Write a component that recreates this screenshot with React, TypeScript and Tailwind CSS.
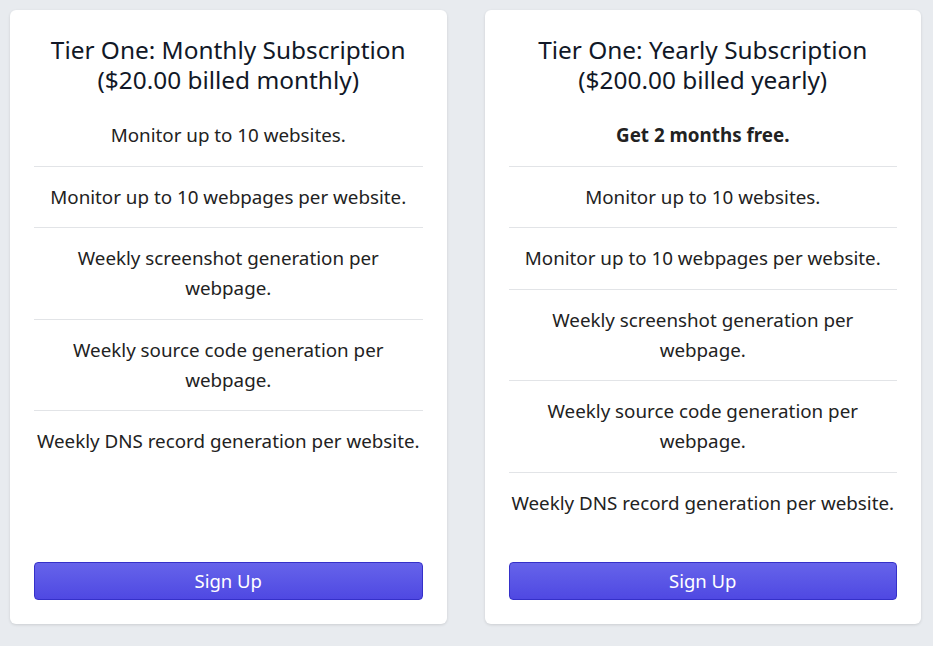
import React from "react";

const features = [
  "Monitor up to 10 websites.",
  "Monitor up to 10 webpages per website.",
  "Weekly screenshot generation per webpage.",
  "Weekly source code generation per webpage.",
  "Weekly DNS record generation per website.",
];

function Card({ title, sub, bonus }: { title: string; sub: string; bonus?: string }) {
  const items = bonus ? [bonus, ...features] : features;
  return (
    <div className="flex-1 bg-white rounded-[6px] shadow-[0_1px_3px_rgba(0,0,0,0.12)] px-6 pt-[25px] pb-6 flex flex-col">
      <h2 className="text-center text-[24.4px] leading-[30px] text-[#111827] mb-[10px]">
        {title}
        <br />
        {sub}
      </h2>
      <ul className="flex flex-col">
        {items.map((t, i) => (
          <li
            key={i}
            className={
              "text-center text-[18.8px] leading-[30px] text-[#222] py-[15.25px] -mx-1 " +
              (i < items.length - 1 ? "border-b border-[#e2e4e7] mx-0 " : "") +
              (bonus && i === 0 ? "font-bold text-[#111]" : "")
            }
          >
            {t}
          </li>
        ))}
      </ul>
      <div className="flex-1" />
      <button className="w-full h-[38px] rounded-[4px] border border-[#3530c9] bg-gradient-to-b from-[#6663ea] to-[#4f48e2] text-white text-[18.5px] leading-[24px]">
        Sign Up
      </button>
    </div>
  );
}

export default function App() {
  return (
    <div
      className="w-[933px] h-[646px] bg-[#e8ebef] flex gap-[38px] pl-[10px] pr-[12px] pt-[10px] pb-[22px]"
      style={{ fontFamily: '"Noto Sans", "Open Sans", sans-serif' }}
    >
      <Card title="Tier One: Monthly Subscription" sub="($20.00 billed monthly)" />
      <Card title="Tier One: Yearly Subscription" sub="($200.00 billed yearly)" bonus="Get 2 months free." />
    </div>
  );
}
